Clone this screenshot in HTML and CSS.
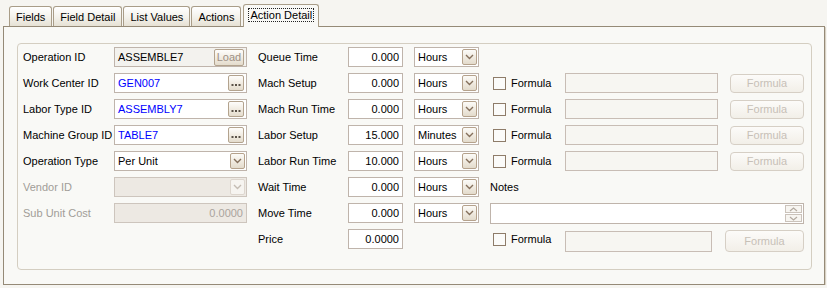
FILE: index.html
```html
<!DOCTYPE html>
<html>
<head>
<meta charset="utf-8">
<link rel="stylesheet" href="styles.css">
</head>
<body>
<div class="window">
  <div class="tabs">
    <div class="tab">Fields</div>
    <div class="tab">Field Detail</div>
    <div class="tab">List Values</div>
    <div class="tab">Actions</div>
    <div class="tab active"><span class="focus">Action Detail</span></div>
  </div>
  <div class="panel">
    <div class="group">
      <div class="grid">
        <!-- row 1 -->
        <div class="lab c1">Operation ID</div>
        <div class="field ro c2">ASSEMBLE7<span class="btn load">Load</span></div>
        <div class="lab c4">Queue Time</div>
        <div class="field num c5">0.000</div>
        <div class="field sel c7">Hours<span class="arrow"><svg width="9" height="6" viewBox="0 0 9 6"><path d="M1 1 L4.5 4.5 L8 1" fill="none" stroke="#85705c" stroke-width="1.4"/></svg></span></div>

        <!-- row 2 -->
        <div class="lab c1">Work Center ID</div>
        <div class="field c2"><span class="blue">GEN007</span><span class="btn dots"><svg width="10" height="4" viewBox="0 0 10 4"><rect x="0.5" y="1" width="2" height="2" fill="#5a5248"/><rect x="4" y="1" width="2" height="2" fill="#5a5248"/><rect x="7.5" y="1" width="2" height="2" fill="#5a5248"/></svg></span></div>
        <div class="lab c4">Mach Setup</div>
        <div class="field num c5">0.000</div>
        <div class="field sel c7">Hours<span class="arrow"><svg width="9" height="6" viewBox="0 0 9 6"><path d="M1 1 L4.5 4.5 L8 1" fill="none" stroke="#85705c" stroke-width="1.4"/></svg></span></div>
        <div class="chk c9"><span class="box"></span>Formula</div>
        <div class="ftext c10"></div>
        <div class="fbtn c12">Formula</div>

        <!-- row 3 -->
        <div class="lab c1">Labor Type ID</div>
        <div class="field c2"><span class="blue">ASSEMBLY7</span><span class="btn dots"><svg width="10" height="4" viewBox="0 0 10 4"><rect x="0.5" y="1" width="2" height="2" fill="#5a5248"/><rect x="4" y="1" width="2" height="2" fill="#5a5248"/><rect x="7.5" y="1" width="2" height="2" fill="#5a5248"/></svg></span></div>
        <div class="lab c4">Mach Run Time</div>
        <div class="field num c5">0.000</div>
        <div class="field sel c7">Hours<span class="arrow"><svg width="9" height="6" viewBox="0 0 9 6"><path d="M1 1 L4.5 4.5 L8 1" fill="none" stroke="#85705c" stroke-width="1.4"/></svg></span></div>
        <div class="chk c9"><span class="box"></span>Formula</div>
        <div class="ftext c10"></div>
        <div class="fbtn c12">Formula</div>

        <!-- row 4 -->
        <div class="lab c1">Machine Group ID</div>
        <div class="field c2"><span class="blue">TABLE7</span><span class="btn dots"><svg width="10" height="4" viewBox="0 0 10 4"><rect x="0.5" y="1" width="2" height="2" fill="#5a5248"/><rect x="4" y="1" width="2" height="2" fill="#5a5248"/><rect x="7.5" y="1" width="2" height="2" fill="#5a5248"/></svg></span></div>
        <div class="lab c4">Labor Setup</div>
        <div class="field num c5">15.000</div>
        <div class="field sel c7">Minutes<span class="arrow"><svg width="9" height="6" viewBox="0 0 9 6"><path d="M1 1 L4.5 4.5 L8 1" fill="none" stroke="#85705c" stroke-width="1.4"/></svg></span></div>
        <div class="chk c9"><span class="box"></span>Formula</div>
        <div class="ftext c10"></div>
        <div class="fbtn c12">Formula</div>

        <!-- row 5 -->
        <div class="lab c1">Operation Type</div>
        <div class="field sel wide c2">Per Unit<span class="arrow"><svg width="9" height="6" viewBox="0 0 9 6"><path d="M1 1 L4.5 4.5 L8 1" fill="none" stroke="#85705c" stroke-width="1.4"/></svg></span></div>
        <div class="lab c4">Labor Run Time</div>
        <div class="field num c5">10.000</div>
        <div class="field sel c7">Hours<span class="arrow"><svg width="9" height="6" viewBox="0 0 9 6"><path d="M1 1 L4.5 4.5 L8 1" fill="none" stroke="#85705c" stroke-width="1.4"/></svg></span></div>
        <div class="chk c9"><span class="box"></span>Formula</div>
        <div class="ftext c10"></div>
        <div class="fbtn c12">Formula</div>

        <!-- row 6 -->
        <div class="lab dim c1">Vendor ID</div>
        <div class="field sel wide dis c2"><span class="arrow off"><svg width="9" height="6" viewBox="0 0 9 6"><path d="M1 1 L4.5 4.5 L8 1" fill="none" stroke="#c4bcb3" stroke-width="1.4"/></svg></span></div>
        <div class="lab c4">Wait Time</div>
        <div class="field num c5">0.000</div>
        <div class="field sel c7">Hours<span class="arrow"><svg width="9" height="6" viewBox="0 0 9 6"><path d="M1 1 L4.5 4.5 L8 1" fill="none" stroke="#85705c" stroke-width="1.4"/></svg></span></div>
        <div class="lab notes-lab cnotes">Notes</div>

        <!-- row 7 -->
        <div class="lab dim c1">Sub Unit Cost</div>
        <div class="field num dis c2">0.0000</div>
        <div class="lab c4">Move Time</div>
        <div class="field num c5">0.000</div>
        <div class="field sel c7">Hours<span class="arrow"><svg width="9" height="6" viewBox="0 0 9 6"><path d="M1 1 L4.5 4.5 L8 1" fill="none" stroke="#85705c" stroke-width="1.4"/></svg></span></div>
        <div class="field notes cnotes">
          <span class="spin">
            <span class="sb"><svg width="9" height="5" viewBox="0 0 9 5"><path d="M1 4 L4.5 1 L8 4" fill="none" stroke="#b3aaa0" stroke-width="1.2"/></svg></span>
            <span class="sb"><svg width="9" height="5" viewBox="0 0 9 5"><path d="M1 1 L4.5 4 L8 1" fill="none" stroke="#b3aaa0" stroke-width="1.2"/></svg></span>
          </span>
        </div>

        <!-- row 8 -->
        <div class="lab c4">Price</div>
        <div class="field num c5">0.0000</div>
        <div class="chk c9"><span class="box"></span>Formula</div>
        <div class="lastrow clast">
          <div class="ftext short"></div>
          <div class="fbtn big">Formula</div>
        </div>
      </div>
    </div>
  </div>
</div>
</body>
</html>
```

FILE: styles.css
```css
html, body {
  margin: 0;
  background: #f6f5f1;
}
body {
  padding: 4px 0 0 3px;
  font: 11px "Liberation Sans", Arial, sans-serif;
  color: #000;
}
.window {
  width: 822px;
}
.tabs {
  display: flex;
  align-items: flex-start;
  height: 22px;
  padding-left: 6px;
}
.tab {
  box-sizing: border-box;
  height: 20px;
  margin-top: 2px;
  margin-right: 1px;
  padding: 0 6px;
  border: 1px solid #a99d88;
  border-bottom: none;
  border-radius: 3px 3px 0 0;
  background: linear-gradient(#ffffff, #f3f1ea 55%, #e6e1d4);
  display: flex;
  align-items: center;
  white-space: nowrap;
}
.tab.active {
  margin-top: 0;
  height: 23px;
  margin-left: 1px;
  padding: 0 5px 2px;
  background: #f9f9f6;
  position: relative;
  z-index: 2;
}
.focus {
  outline: 1px dotted #222;
  outline-offset: 0;
  padding: 0 1px;
  line-height: 12px;
}
.panel {
  position: relative;
  z-index: 1;
  border: 1px solid #958a77;
  background: #f9f9f6;
  padding: 16px 12px 14px 13px;
  box-shadow: 1px 1px 0 #d8d1c4;
}
.group {
  border: 1px solid #d4cec1;
  border-radius: 4px;
  padding: 3px 5px 20px 5px;
}
.grid {
  display: grid;
  grid-template-columns: 91px 133px 11px 90px 55px 11px 65px 11px 75px 153px 12px 74px;
  grid-template-rows: repeat(8, 20px);
  row-gap: 6px;
}
.c1 { grid-column: 1; }
.c2 { grid-column: 2; }
.c4 { grid-column: 4; }
.c5 { grid-column: 5; }
.c7 { grid-column: 7; }
.c9 { grid-column: 9; }
.c10 { grid-column: 10; }
.c12 { grid-column: 12; }
.cnotes { grid-column: 9 / 13; }
.clast { grid-column: 10 / 13; }

.lab {
  display: flex;
  align-items: center;
  white-space: nowrap;
}
.lab.dim { color: #a19d98; }

.field {
  box-sizing: border-box;
  height: 20px;
  border: 1px solid #bfb4ab;
  background: #ffffff;
  display: flex;
  align-items: center;
  padding: 0 2px 0 3px;
  white-space: nowrap;
}
.field.ro { background: #f3f2ee; }
.field.num { justify-content: flex-end; padding-right: 3px; }
.field.dis {
  background: #ede9e3;
  border-color: #cdc5bd;
  color: #aaa49d;
}
.field.sel { padding-right: 1px; }
.field.sel.wide { padding-right: 1px; }
.blue { color: #0000ff; }

.btn {
  margin-left: auto;
  box-sizing: border-box;
  border: 1px solid #b3a38e;
  border-radius: 2px;
  background: linear-gradient(#fefdfb, #efe9de 60%, #e4dccd);
  display: flex;
  align-items: center;
  justify-content: center;
}
.btn.load {
  width: 30px;
  height: 17px;
  color: #9d9085;
  font-size: 11px;
}
.btn.dots {
  width: 16px;
  height: 16px;
  padding-top: 4px;
}
.arrow {
  margin-left: auto;
  box-sizing: border-box;
  width: 15px;
  height: 16px;
  border: 1px solid #b5a28c;
  border-radius: 2px;
  background: linear-gradient(#fcfbf8, #eee8dd 60%, #e3dbcc);
  display: flex;
  align-items: center;
  justify-content: center;
}
.arrow.off {
  border-color: #ddd6ce;
  background: #f6f4f0;
}

.chk {
  display: flex;
  align-items: center;
  gap: 5px;
  margin-left: 3px;
}
.box {
  box-sizing: border-box;
  width: 13px;
  height: 13px;
  border: 1px solid #8e7c69;
  background: #fbfbf9;
}
.ftext {
  box-sizing: border-box;
  height: 20px;
  border: 1px solid #c8bdb5;
  background: #f7f6f2;
}
.fbtn {
  box-sizing: border-box;
  height: 19px;
  align-self: center;
  border: 1px solid #d6cfc5;
  border-radius: 4px;
  background: linear-gradient(#fcfbf9, #f2efe8);
  color: #c7c0b7;
  display: flex;
  align-items: center;
  justify-content: center;
}
.notes-lab { padding-left: 0; }
.field.notes {
  height: 21px;
  justify-content: flex-end;
  padding: 0 1px 0 0;
}
.spin {
  display: flex;
  flex-direction: column;
  gap: 1px;
}
.sb {
  box-sizing: border-box;
  width: 17px;
  height: 8px;
  border: 1px solid #cbc3bb;
  background: #f7f5f1;
  display: flex;
  align-items: center;
  justify-content: center;
}
.lastrow {
  display: flex;
  align-items: center;
  gap: 13px;
  height: 22px;
  margin-top: 1px;
}
.ftext.short { width: 147px; height: 21px; }
.fbtn.big { width: 79px; height: 22px; }
```
